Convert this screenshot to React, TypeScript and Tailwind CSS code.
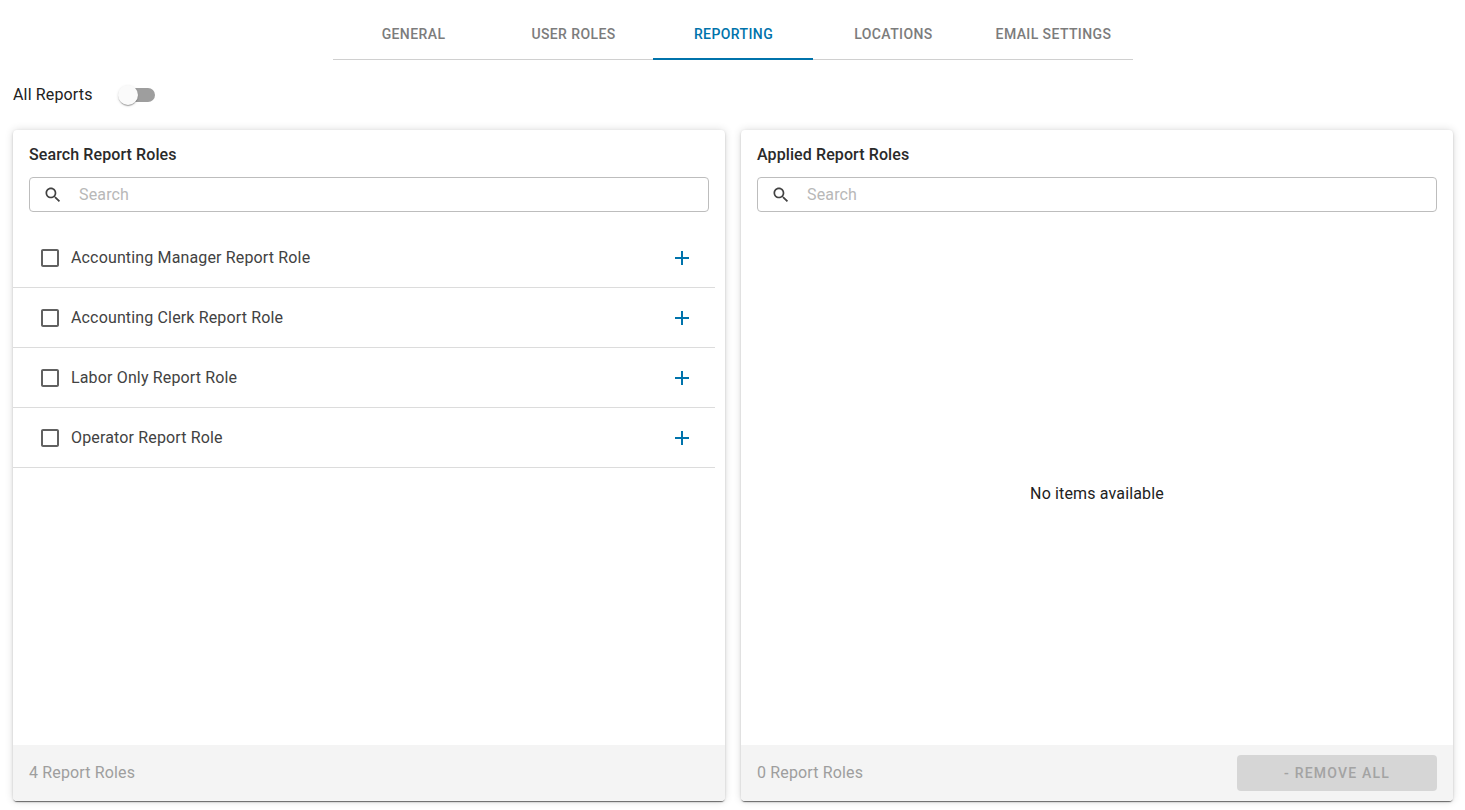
import React from "react";

const TABS = ["GENERAL", "USER ROLES", "REPORTING", "LOCATIONS", "EMAIL SETTINGS"];
const ROLES = [
  "Accounting Manager Report Role",
  "Accounting Clerk Report Role",
  "Labor Only Report Role",
  "Operator Report Role",
];

const SearchBox: React.FC = () => (
  <div className="mx-4 mt-3 h-[35px] flex items-center border border-[#bdbdbd] rounded-[4px]">
    <svg className="w-5 h-5 ml-[13px] text-[#424242]" viewBox="0 0 24 24" fill="currentColor">
      <path d="M15.5 14h-.79l-.28-.27C15.41 12.59 16 11.11 16 9.5 16 5.91 13.09 3 9.5 3S3 5.91 3 9.5 5.91 16 9.5 16c1.61 0 3.09-.59 4.23-1.57l.27.28v.79l5 4.99L20.49 19l-4.99-5zm-6 0C7.01 14 5 11.99 5 9.5S7.01 5 9.5 5 14 7.01 14 9.5 11.99 14 9.5 14z" />
    </svg>
    <input
      placeholder="Search"
      className="ml-4 flex-1 min-w-0 bg-transparent outline-none text-base tracking-[0.15px] text-[#212121] placeholder:text-[#b8b8b8]"
    />
  </div>
);

const Card: React.FC<{ title: string; footer: string; children: React.ReactNode; action?: React.ReactNode }> = ({
  title,
  footer,
  children,
  action,
}) => (
  <div className="h-[671px] flex flex-col bg-white rounded-[4px] overflow-hidden shadow-[0_2px_1px_-1px_rgba(0,0,0,0.45),0_1px_1px_0_rgba(0,0,0,0.14),0_1px_3px_0_rgba(0,0,0,0.12),0_0_8px_rgba(0,0,0,0.14)]">
    <h2 className="px-4 pt-[15px] text-base leading-5 font-medium tracking-[0.1px] text-[#2a2a2a]">{title}</h2>
    <SearchBox />
    <div className="flex-1 min-h-0">{children}</div>
    <div className="h-14 shrink-0 flex items-center justify-between bg-[#f4f4f4] pl-4 pr-4">
      <span className="text-base tracking-[0.15px] text-[#9e9e9e]">{footer}</span>
      {action}
    </div>
  </div>
);

const App: React.FC = () => {
  return (
    <div className="h-[810px] overflow-hidden bg-white font-['Roboto',sans-serif]">
      {/* Tabs */}
      <div className="w-[800px] mx-auto flex border-b border-[#d0d0d0] h-[60px]">
        {TABS.map((tab) => {
          const active = tab === "REPORTING";
          return (
            <div
              key={tab}
              className={
                active
                  ? "w-40 h-[60px] flex items-center justify-center pl-[2px] pt-[10px] text-sm font-medium tracking-[0.4px] text-[#0073ab] border-b-2 border-[#0073ab]"
                  : "w-40 h-[60px] flex items-center justify-center pl-[2px] pt-[8px] text-sm font-medium tracking-[0.4px] text-[#7c7c7c]"
              }
            >
              {tab}
            </div>
          );
        })}
      </div>

      {/* All reports toggle */}
      <div className="flex items-center h-[70px] pl-[13px]">
        <span className="text-base tracking-[0.15px] text-[#212121] w-[105px]">All Reports</span>
        <div className="relative w-[34px] h-[14px] ml-[3px] rounded-full bg-[#9e9e9e]">
          <div className="absolute -left-[3px] -top-[3px] w-5 h-5 rounded-full bg-[#fafafa] shadow-[0_2px_1px_-1px_rgba(0,0,0,0.2),0_1px_1px_0_rgba(0,0,0,0.14),0_1px_3px_0_rgba(0,0,0,0.12)]" />
        </div>
      </div>

      {/* Panels */}
      <div className="grid grid-cols-2 gap-4 pl-[13px] pr-3">
        <Card title="Search Report Roles" footer="4 Report Roles">
          <div className="mt-4 mr-[10px]">
            {ROLES.map((role) => (
              <div key={role} className="h-[60px] flex items-center border-b border-[#dcdcdc]">
                <svg className="w-6 h-6 ml-[25px] text-[#616161]" viewBox="0 0 24 24" fill="currentColor">
                  <path d="M19 5v14H5V5h14m0-2H5c-1.1 0-2 .9-2 2v14c0 1.1.9 2 2 2h14c1.1 0 2-.9 2-2V5c0-1.1-.9-2-2-2z" />
                </svg>
                <span className="ml-[9px] flex-1 text-base tracking-[0.15px] text-[#424242]">{role}</span>
                <svg className="w-6 h-6 mr-[21px] text-[#0073ab]" viewBox="0 0 24 24" fill="currentColor">
                  <path d="M19 13h-6v6h-2v-6H5v-2h6V5h2v6h6v2z" />
                </svg>
              </div>
            ))}
          </div>
        </Card>
        <Card
          title="Applied Report Roles"
          footer="0 Report Roles"
          action={
            <button className="w-[200px] h-9 rounded-[4px] bg-[#d6d6d6] text-sm font-medium tracking-[1.2px] text-[#a3a3a3]">
              - REMOVE ALL
            </button>
          }
        >
          <div className="h-full pt-[31px] flex items-center justify-center text-base tracking-[0.15px] text-[#212121]">
            No items available
          </div>
        </Card>
      </div>
    </div>
  );
};

export default App;
